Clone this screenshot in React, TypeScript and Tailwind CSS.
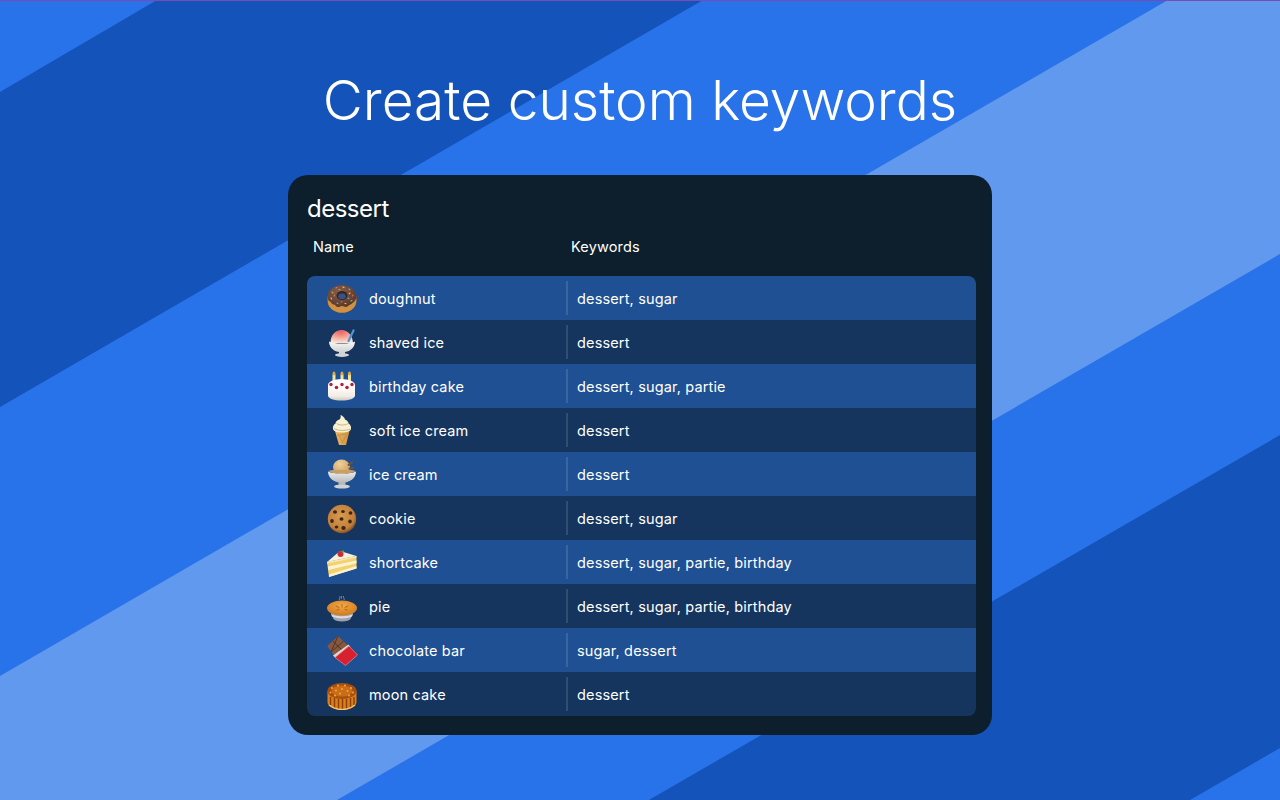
import React from 'react';

const Doughnut = () => (
  <svg viewBox="0 0 32 32" className="w-8 h-8">
    <defs>
      <radialGradient id="icing" cx="0.42" cy="0.32" r="0.75">
        <stop offset="0" stopColor="#8a6048" />
        <stop offset="1" stopColor="#573325" />
      </radialGradient>
    </defs>
    <ellipse cx="16" cy="17.500" rx="14.800" ry="13.500" fill="#a8682a" />
    <ellipse cx="16" cy="20" rx="14" ry="10.500" fill="#cf9144" />
    <path d="M1.500 15C1.500 8 8 3 16 3s14.500 5 14.500 12c0 2-1.500 3-2.500 5-1.500 0-2 2.500-3.500 2.500S22 25 20 25s-2-1-4-1-2.500 1.500-4.500 1-2-2.500-4-2.500-2-2.500-3.500-3-2.500-2.500-2.500-4.500z" fill="url(#icing)" />
    <ellipse cx="16" cy="13.500" rx="5.500" ry="4.500" fill="#3a2620" />
    <ellipse cx="16" cy="14.300" rx="3.800" ry="2.900" fill="#31548a" />
    <g strokeWidth="1.100" strokeLinecap="round">
      <path d="M6 10l1 1" stroke="#7fc65a" />
      <path d="M10 6l1-.6" stroke="#e26a8a" />
      <path d="M17 5l1 .5" stroke="#f0d050" />
      <path d="M23 7l.8.8" stroke="#6ab0e0" />
      <path d="M27 13l-.4 1" stroke="#e26a8a" />
      <path d="M25 19l1-.6" stroke="#7fc65a" />
      <path d="M19 21.500l1 .2" stroke="#f0d050" />
      <path d="M11 21l1 .6" stroke="#6ab0e0" />
      <path d="M5 16l.6 1" stroke="#f0d050" />
      <path d="M8 14l.6-.8" stroke="#e26a8a" />
      <path d="M24 11l-.8.6" stroke="#f0d050" />
      <path d="M13 7.500l.8.3" stroke="#7fc65a" />
      <path d="M22 16l.8.4" stroke="#6ab0e0" />
      <path d="M15 20l.9-.2" stroke="#e26a8a" />
    </g>
  </svg>
);

const ShavedIce = () => (
  <svg viewBox="0 0 32 32" className="w-8 h-8">
    <defs>
      <radialGradient id="snow" cx="0.45" cy="0.1" r="0.9">
        <stop offset="0" stopColor="#ea5f62" />
        <stop offset="0.45" stopColor="#f39a8e" />
        <stop offset="1" stopColor="#fbe6d4" />
      </radialGradient>
      <linearGradient id="cup" x1="0" y1="0" x2="0" y2="1">
        <stop offset="0" stopColor="#f8f8f6" />
        <stop offset="1" stopColor="#c9cccc" />
      </linearGradient>
    </defs>
    <path d="M4.500 17C4.500 9 9.500 4 15.500 4S26.500 9 27 17z" fill="url(#snow)" />
    <path d="M22.500 15L27.500 4.500" stroke="#4d96d6" strokeWidth="2.200" strokeLinecap="round" />
    <path d="M3 15.500c3 1.500 7 2 13 2s10-.5 13-2c0 5-3.500 9.500-10 10.500v2h-6v-2C6.500 25 3 20.500 3 15.500z" fill="url(#cup)" />
    <ellipse cx="16" cy="29" rx="7" ry="1.900" fill="#d2d4d4" />
  </svg>
);

const BirthdayCake = () => (
  <svg viewBox="0 0 32 32" className="w-8 h-8">
    <defs>
      <linearGradient id="cakeBody" x1="0" y1="0" x2="0" y2="1">
        <stop offset="0" stopColor="#fffdf8" />
        <stop offset="0.7" stopColor="#f2ede6" />
        <stop offset="1" stopColor="#cfc9c2" />
      </linearGradient>
    </defs>
    <g fill="#efe4a4">
      <rect x="6.500" y="4" width="3" height="11" rx="0.800" />
      <rect x="14.500" y="4" width="3" height="11" rx="0.800" />
      <rect x="22" y="4" width="3" height="11" rx="0.800" />
    </g>
    <g fill="#e9a93a">
      <ellipse cx="8" cy="3.500" rx="1.400" ry="2" />
      <ellipse cx="16" cy="3.500" rx="1.400" ry="2" />
      <ellipse cx="23.500" cy="3.500" rx="1.400" ry="2" />
    </g>
    <path d="M2 15.500v10C2 28.500 8 30.500 15.500 30.500S29 28.500 29 25.500v-10z" fill="url(#cakeBody)" />
    <ellipse cx="15.500" cy="15" rx="13.500" ry="6" fill="#fffdf9" />
    <g fill="#b91f3e">
      <circle cx="5" cy="14.500" r="1.700" />
      <circle cx="10.500" cy="17.500" r="1.800" />
      <circle cx="16" cy="14.500" r="1.700" />
      <circle cx="21" cy="17.500" r="1.800" />
      <circle cx="26" cy="14.500" r="1.700" />
    </g>
  </svg>
);

const SoftIce = () => (
  <svg viewBox="0 0 32 32" className="w-8 h-8">
    <defs>
      <linearGradient id="softCone" x1="0" y1="0" x2="1" y2="0">
        <stop offset="0" stopColor="#eab768" />
        <stop offset="1" stopColor="#cf9340" />
      </linearGradient>
    </defs>
    <path d="M9 17h14.500l-3.500 14h-7z" fill="url(#softCone)" />
    <path d="M12 20l5 9M21 20l-5 9M10.500 22l9-2" stroke="#b97f2f" strokeWidth="0.700" opacity="0.7" />
    <path d="M14.500 1c2.500 1 4 2.500 4.500 4.500 2 .8 3.500 2.500 3.500 4 2 1 3 3.500 2.500 5.500-.5 2-3.500 3.500-9 3.500s-8.500-1.500-9-3.500c-.5-2 .5-4.500 2.500-5.500 0-2 2-3.500 4-4 1-1 1.500-2.500 1-4.500z" fill="#f8f0d2" />
    <path d="M10.500 9.500c3 2 8 2 12 0M8 14.500c4 2.500 11 2.500 16.500.5" stroke="#cdb578" strokeWidth="1" fill="none" />
  </svg>
);

const IceCream = () => (
  <svg viewBox="0 0 32 32" className="w-8 h-8">
    <defs>
      <radialGradient id="scoop" cx="0.4" cy="0.3" r="0.8">
        <stop offset="0" stopColor="#f0d09a" />
        <stop offset="1" stopColor="#c9995a" />
      </radialGradient>
      <linearGradient id="silver" x1="0" y1="0" x2="0" y2="1">
        <stop offset="0" stopColor="#ecedec" />
        <stop offset="1" stopColor="#a9acae" />
      </linearGradient>
    </defs>
    <ellipse cx="15.500" cy="9" rx="8.500" ry="7.500" fill="url(#scoop)" />
    <path d="M22.500 7l3.500-2.800M23.500 10.500l3.500-.8" stroke="#7d4f2e" strokeWidth="2" strokeLinecap="round" />
    <path d="M2 13.500c3 1.500 8 2 14 2s11-.5 14-2c0 5-3.500 9.500-10.500 11v3h-7v-3C5.500 23 2 18.500 2 13.500z" fill="url(#silver)" />
    <path d="M2.500 13c3-1.500 7-1 13.500-1s10-.5 13.500 1c-3 2-7 2.500-13.500 2.500S5.500 15 2.500 13z" fill="#c9a064" />
    <ellipse cx="16" cy="28.500" rx="8" ry="2" fill="#cfd1d2" />
  </svg>
);

const Cookie = () => (
  <svg viewBox="0 0 32 32" className="w-8 h-8">
    <defs>
      <radialGradient id="dough" cx="0.45" cy="0.4" r="0.6">
        <stop offset="0" stopColor="#d89a50" />
        <stop offset="0.8" stopColor="#c17f39" />
        <stop offset="1" stopColor="#8a5222" />
      </radialGradient>
    </defs>
    <circle cx="16" cy="17" r="14.200" fill="url(#dough)" />
    <g fill="#3d2417">
      <ellipse cx="9" cy="10" rx="2" ry="1.700" />
      <ellipse cx="17" cy="9.500" rx="1.800" ry="1.600" />
      <ellipse cx="24.500" cy="11" rx="1.900" ry="1.800" />
      <ellipse cx="6" cy="19" rx="1.800" ry="1.900" />
      <ellipse cx="15.500" cy="17" rx="2" ry="1.800" />
      <ellipse cx="24" cy="19.500" rx="1.800" ry="2" />
      <ellipse cx="10.500" cy="25" rx="1.800" ry="1.600" />
      <ellipse cx="17.500" cy="26" rx="2.200" ry="2" />
    </g>
  </svg>
);

const Shortcake = () => (
  <svg viewBox="0 0 32 32" className="w-8 h-8">
    <path d="M1 16L30.500 10v12.500L3 31z" fill="#f3d26c" />
    <path d="M2 20.500L30.500 14.500v2.800L2.300 24z" fill="#fbf3d6" />
    <path d="M3 28.500L30.500 20v2.500L3 31z" fill="#fbf3d6" />
    <path d="M1 16L14 5l16.500 5z" fill="#fbf1da" />
    <path d="M1 16L30.500 10v1.500L1 17.500z" fill="#f8e8bd" />
    <circle cx="14.500" cy="8" r="3" fill="#cf2b33" />
    <path d="M15 5.500l2.500-1.500 .8 2-2 1z" fill="#5e9b3a" />
  </svg>
);

const Pie = () => (
  <svg viewBox="0 0 32 32" className="w-8 h-8">
    <defs>
      <radialGradient id="crust" cx="0.5" cy="0.35" r="0.7">
        <stop offset="0" stopColor="#f2a944" />
        <stop offset="1" stopColor="#cf7519" />
      </radialGradient>
    </defs>
    <path d="M4 21h24l-3.500 8c-1 1.500-4 2.500-8.500 2.500s-7.500-1-8.500-2.500z" fill="#9da2a8" />
    <path d="M5 24c5 3 17 3 22 0l-1 2.500c-5 2.500-15 2.500-20 0z" fill="#d9dcdf" />
    <ellipse cx="16" cy="18" rx="15" ry="7.500" fill="url(#crust)" />
    <path d="M10 16l3 1.500M22 16l-3 1.500M16 14.500v2.500M11 20l2-.5M21 20l-2-.5" stroke="#a4611a" strokeWidth="0.900" strokeLinecap="round" />
    <path d="M13.500 10c-1-1.500 1-2 .5-4M18 10c1-1.500-1-2-.5-4M15.500 9c-.5-1 .5-1.500 0-3" stroke="#9fb0c8" strokeWidth="0.800" fill="none" opacity="0.8" />
  </svg>
);

const Chocolate = () => (
  <svg viewBox="0 0 32 32" className="w-8 h-8">
    <path d="M1.300 12L12 2l11 10.500L9 23z" fill="#875840" />
    <g stroke="#56331f" strokeWidth="1">
      <path d="M6.600 7l11 10.500" />
      <path d="M12 2L5 18M17.500 7.300L5 18" />
    </g>
    <path d="M7 21.500L22.500 10.500l2 2.500-15 11z" fill="#dadada" />
    <path d="M9 23.500L23 12l8.500 9L19.500 31.500z" fill="#d9202e" stroke="#ee8a8a" strokeWidth="0.700" />
  </svg>
);

const MoonCake = () => (
  <svg viewBox="0 0 32 32" className="w-8 h-8">
    <path d="M1.500 13v11c0 4.500 6.500 8 14.500 8s14.500-3.500 14.500-8V13z" fill="#d9821c" />
    <g stroke="#8e3f0b" strokeWidth="1.500">
      <path d="M4.500 19v8M8.500 20v10M12.500 21v10M16.500 21v11M20.500 21v10M24.500 20v10M28 19v8" />
    </g>
    <path d="M3 27c4 3 9 4.500 13 4.500S25 30 29 27" stroke="#f6c66b" strokeWidth="1.500" fill="none" />
    <ellipse cx="16" cy="13" rx="14.500" ry="8" fill="#a94f0e" />
    <ellipse cx="16" cy="13" rx="10.500" ry="5.500" fill="#c96d16" />
    <g fill="#f0a845">
      <circle cx="6" cy="10" r="1" />
      <circle cx="12" cy="7.500" r="1" />
      <circle cx="19" cy="7.500" r="1" />
      <circle cx="25" cy="10" r="1" />
      <circle cx="27" cy="14.500" r="1" />
      <circle cx="4.500" cy="14.500" r="1" />
      <circle cx="10" cy="12.500" r="1" />
      <circle cx="16" cy="11" r="1" />
      <circle cx="21.500" cy="13" r="1" />
      <circle cx="14" cy="15.500" r="1" />
      <circle cx="23" cy="17.500" r="1" />
      <circle cx="9" cy="17.500" r="1" />
    </g>
  </svg>
);

const ROWS = [
  { name: 'doughnut', keywords: 'dessert, sugar', icon: <Doughnut /> },
  { name: 'shaved ice', keywords: 'dessert', icon: <ShavedIce /> },
  { name: 'birthday cake', keywords: 'dessert, sugar, partie', icon: <BirthdayCake /> },
  { name: 'soft ice cream', keywords: 'dessert', icon: <SoftIce /> },
  { name: 'ice cream', keywords: 'dessert', icon: <IceCream /> },
  { name: 'cookie', keywords: 'dessert, sugar', icon: <Cookie /> },
  { name: 'shortcake', keywords: 'dessert, sugar, partie, birthday', icon: <Shortcake /> },
  { name: 'pie', keywords: 'dessert, sugar, partie, birthday', icon: <Pie /> },
  { name: 'chocolate bar', keywords: 'sugar, dessert', icon: <Chocolate /> },
  { name: 'moon cake', keywords: 'dessert', icon: <MoonCake /> },
];

const Stripes = () => (
  <svg viewBox="0 0 1280 800" className="absolute inset-0 w-[1280px] h-[800px]">
    <rect width="1280" height="800" fill="#2872ea" />
    <polygon points="157,0 703,0 0,407 0,92" fill="#1353ba" />
    <polygon points="1168,0 1280,0 1280,254 337,800 0,800 0,676" fill="#6199ee" />
    <polygon points="1280,435 1280,748 1190,800 649,800" fill="#1353ba" />
    <rect width="1280" height="1" fill="#7a4bb0" />
  </svg>
);

export default function App() {
  return (
    <div className="relative w-[1280px] h-[800px] overflow-hidden font-['Inter',sans-serif] text-white">
      <Stripes />
      <div className="relative flex flex-col items-center">
        <h1 className="mt-[64px] h-[72px] leading-[72px] text-[55px] font-light">
          Create custom keywords
        </h1>
        <div className="mt-[39px] w-[704px] h-[560px] rounded-[20px] bg-[#0d1f2d] px-[19px] pt-[20px]">
          <div className="h-[28px] leading-[28px] text-[24px] tracking-[-0.5px]">dessert</div>
          <div className="mt-[11px] flex h-[24px] items-center pt-[1px] text-[14.500px] tracking-[0.15px]">
            <div className="w-[264px] pl-[6px]">Name</div>
            <div>Keywords</div>
          </div>
          <div className="mt-[18px] w-[669px] rounded-lg overflow-hidden">
            {ROWS.map((row, i) => (
              <div
                key={row.name}
                className={`flex h-[44px] items-center text-[14.500px] tracking-[0.15px] ${i % 2 === 0 ? 'bg-[#1f5093]' : 'bg-[#15355f]'}`}
              >
                <div className="flex w-[259px] items-center pl-[19px]">
                  {row.icon}
                  <span className="ml-[11px] pt-[1px]">{row.name}</span>
                </div>
                <div className="h-[34px] w-[2px] bg-[#ffffff1f]" />
                <div className="pl-[9px] pt-[1px]">{row.keywords}</div>
              </div>
            ))}
          </div>
        </div>
      </div>
    </div>
  );
}
